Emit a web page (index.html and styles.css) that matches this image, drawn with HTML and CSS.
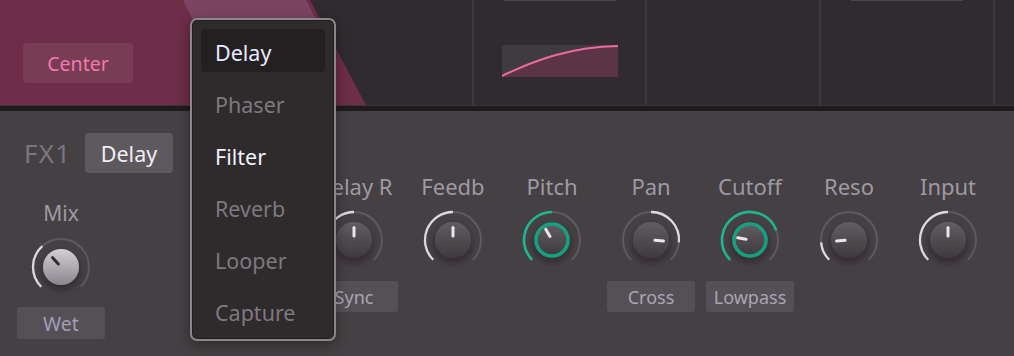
FILE: index.html
```html
<!DOCTYPE html>
<html>
<head>
<meta charset="utf-8">
<link rel="stylesheet" href="styles.css">
</head>
<body>
<svg class="defs" width="0" height="0" aria-hidden="true">
  <defs>
    <linearGradient id="kg" x1="0" y1="0" x2="0" y2="1">
      <stop offset="0" stop-color="#625d62"/>
      <stop offset="1" stop-color="#3e3a3d"/>
    </linearGradient>
    <linearGradient id="kgl" x1="0" y1="0" x2="0" y2="1">
      <stop offset="0" stop-color="#d4cfd5"/>
      <stop offset="1" stop-color="#8b868d"/>
    </linearGradient>
    <filter id="ks" x="-60%" y="-60%" width="220%" height="220%">
      <feDropShadow dx="0" dy="4" stdDeviation="3" flood-color="#1c181a" flood-opacity="0.55"/>
    </filter>
  </defs>
</svg>

<div class="top">
  <div class="cell first">
    <svg class="art" width="472" height="105" viewBox="0 0 472 105">
      <polygon points="0,0 310,0 366,105 0,105" fill="#6e2d48"/>
      <path d="M183,0 L306,0 L328,42 L206,42 Q192,20 183,0 Z" fill="#7a4462"/>
    </svg>
    <div class="center-btn">Center</div>
  </div>
  <div class="cell">
    <div class="tab"></div>
    <svg class="curve" width="116" height="32" viewBox="0 0 116 32">
      <rect x="0" y="0" width="116" height="32" rx="2" fill="#403b3f"/>
      <path d="M0,31 C35,14 70,2 116,1 L116,32 L0,32 Z" fill="#5b3546"/>
      <path d="M0,31 C35,14 70,2 116,1" fill="none" stroke="#ec6aa0" stroke-width="2"/>
    </svg>
  </div>
  <div class="cell"></div>
  <div class="cell">
    <div class="tab"></div>
  </div>
  <div class="cell last"></div>
</div>
<div class="sep"></div>

<div class="panel">
  <div class="left">
    <div class="fx-head">
      <span class="fx-name">FX1</span>
      <span class="fx-type">Delay</span>
    </div>
    <div class="col mix">
      <div class="label mix-label">Mix</div>
      <svg class="knob" width="64" height="64" viewBox="0 0 64 64">
        <path class="track" d="M12.2 51.8 A28 28 0 1 1 51.8 51.8"/>
        <path class="val" d="M12.2 51.8 A28 28 0 0 1 13.26 11.19"/>
        <circle class="body light" cx="32" cy="32" r="18"/>
        <line class="ptr dark" x1="32" y1="28" x2="32" y2="19.5" transform="rotate(-42 32 32)"/>
      </svg>
      <div class="btn wet">Wet</div>
    </div>
  </div>

  <div class="knobs">
    <div class="col placeholder"></div>
    <div class="col">
      <div class="label">Delay R</div>
      <svg class="knob" width="64" height="64" viewBox="0 0 64 64">
        <path class="track" d="M12.2 51.8 A28 28 0 1 1 51.8 51.8"/>
        <path class="val" d="M12.2 51.8 A28 28 0 0 1 32 4"/>
        <circle class="body" cx="32" cy="32" r="18"/>
        <line class="ptr" x1="32" y1="28" x2="32" y2="19.5"/>
      </svg>
      <div class="btn">Sync</div>
    </div>
    <div class="col">
      <div class="label">Feedb</div>
      <svg class="knob" width="64" height="64" viewBox="0 0 64 64">
        <path class="track" d="M12.2 51.8 A28 28 0 1 1 51.8 51.8"/>
        <path class="val" d="M12.2 51.8 A28 28 0 0 1 32 4"/>
        <circle class="body" cx="32" cy="32" r="18"/>
        <line class="ptr" x1="32" y1="28" x2="32" y2="19.5"/>
      </svg>
    </div>
    <div class="col">
      <div class="label">Pitch</div>
      <svg class="knob" width="64" height="64" viewBox="0 0 64 64">
        <path class="track" d="M12.2 51.8 A28 28 0 1 1 51.8 51.8"/>
        <path class="val teal" d="M12.2 51.8 A28 28 0 0 1 32 4"/>
        <circle class="body active" cx="32" cy="32" r="16"/>
        <line class="ptr" x1="32" y1="28" x2="32" y2="19.5" transform="rotate(-30 32 32)"/>
      </svg>
    </div>
    <div class="col">
      <div class="label">Pan</div>
      <svg class="knob" width="64" height="64" viewBox="0 0 64 64">
        <path class="track" d="M12.2 51.8 A28 28 0 1 1 51.8 51.8"/>
        <path class="val" d="M32 4 A28 28 0 0 1 59.89 34.44"/>
        <circle class="body" cx="32" cy="32" r="18"/>
        <line class="ptr" x1="32" y1="28" x2="32" y2="19.5" transform="rotate(95 32 32)"/>
      </svg>
      <div class="btn">Cross</div>
    </div>
    <div class="col">
      <div class="label">Cutoff</div>
      <svg class="knob" width="64" height="64" viewBox="0 0 64 64">
        <path class="track" d="M12.2 51.8 A28 28 0 1 1 51.8 51.8"/>
        <path class="val teal" d="M12.2 51.8 A28 28 0 1 1 58.31 22.42"/>
        <circle class="body active" cx="32" cy="32" r="16"/>
        <line class="ptr" x1="32" y1="28" x2="32" y2="19.5" transform="rotate(-80 32 32)"/>
      </svg>
      <div class="btn">Lowpass</div>
    </div>
    <div class="col">
      <div class="label">Reso</div>
      <svg class="knob" width="64" height="64" viewBox="0 0 64 64">
        <path class="track" d="M12.2 51.8 A28 28 0 1 1 51.8 51.8"/>
        <path class="val" d="M12.2 51.8 A28 28 0 0 1 4.11 34.44"/>
        <circle class="body" cx="32" cy="32" r="18"/>
        <line class="ptr" x1="32" y1="28" x2="32" y2="19.5" transform="rotate(-95 32 32)"/>
      </svg>
    </div>
    <div class="col">
      <div class="label">Input</div>
      <svg class="knob" width="64" height="64" viewBox="0 0 64 64">
        <path class="track" d="M12.2 51.8 A28 28 0 1 1 51.8 51.8"/>
        <path class="val" d="M12.2 51.8 A28 28 0 0 1 32 4"/>
        <circle class="body" cx="32" cy="32" r="18"/>
        <line class="ptr" x1="32" y1="28" x2="32" y2="19.5"/>
      </svg>
    </div>
  </div>
</div>

<div class="menu">
  <div class="item selected">Delay</div>
  <div class="item">Phaser</div>
  <div class="item hot">Filter</div>
  <div class="item">Reverb</div>
  <div class="item">Looper</div>
  <div class="item">Capture</div>
</div>
</body>
</html>
```

FILE: styles.css
```css
* { box-sizing: border-box; }

html, body {
  margin: 0;
  padding: 0;
}

body {
  width: 1014px;
  height: 356px;
  overflow: hidden;
  background: #454043;
  font-family: "Noto Sans", "Open Sans", sans-serif;
  position: relative;
}

.defs {
  display: block;
  width: 0;
  height: 0;
  overflow: hidden;
}

/* ---------- top strip ---------- */
.top {
  display: flex;
  height: 105px;
  background: #302b2e;
}

.cell {
  width: 174px;
  flex: none;
  border-left: 2px solid #3e393c;
  display: flex;
  flex-direction: column;
  align-items: center;
}

.cell.first {
  width: 472px;
  border-left: none;
  position: relative;
  align-items: flex-start;
}

.cell:nth-child(2) { width: 173px; }
.cell.last { flex: 1; }

.art {
  position: absolute;
  left: 0;
  top: 0;
}

.center-btn {
  position: relative;
  margin: 43px 0 0 23px;
  width: 110px;
  height: 40px;
  border-radius: 4px;
  background: rgba(255, 255, 255, 0.075);
  color: #f27aab;
  font-size: 19.5px;
  display: flex;
  align-items: center;
  justify-content: center;
}

.tab {
  width: 112px;
  height: 1px;
  background: #4b4649;
}

.curve {
  display: block;
  margin-top: 44px;
}

.sep {
  height: 6px;
  background: #1f1b1d;
  border-top: 1px solid #3a3538;
}

/* ---------- FX panel ---------- */
.panel {
  display: flex;
  height: 245px;
  padding: 22px 0 0 17px;
  background: #454043;
  border-top-left-radius: 4px;
}

.left {
  width: 194px;
  flex: none;
}

.fx-head {
  display: flex;
  align-items: center;
  height: 40px;
  padding-left: 7px;
}

.fx-name {
  color: #7b767a;
  font-size: 26px;
  letter-spacing: 1.2px;
  width: 61px;
}

.fx-type {
  width: 88px;
  height: 40px;
  border-radius: 4px;
  background: #5e595d;
  color: #f1edf5;
  font-size: 21.5px;
  display: flex;
  align-items: center;
  justify-content: center;
}

.knobs {
  display: flex;
  gap: 11px;
  margin-top: 40px;
}

.col {
  width: 88px;
  flex: none;
  display: flex;
  flex-direction: column;
  align-items: center;
}

.col.mix {
  margin-top: 27px;
}

.label {
  font-size: 22px;
  line-height: 26px;
  color: #9f99a3;
  white-space: nowrap;
}

.label.mix-label {
  font-size: 21px;
}

.knob {
  display: block;
  margin-top: 9px;
  overflow: visible;
}

.track {
  fill: none;
  stroke: #5e595d;
  stroke-width: 2;
}

.val {
  fill: none;
  stroke: #dcd7de;
  stroke-width: 2.3;
}

.val.teal {
  stroke: #1fb58f;
  stroke-width: 2.6;
}

.body {
  fill: url(#kg);
  filter: url(#ks);
}

.body.light {
  fill: url(#kgl);
}

.body.active {
  stroke: #15a07f;
  stroke-width: 3.5;
}

.ptr {
  stroke: #ece5ee;
  stroke-width: 3;
  stroke-linecap: round;
}

.ptr.dark {
  stroke: #2f2b2e;
}

.btn {
  margin-top: 9px;
  width: 88px;
  height: 31px;
  border-radius: 3px;
  background: #555056;
  color: #aaa4b2;
  font-size: 18px;
  display: flex;
  align-items: center;
  justify-content: center;
}

.btn.wet {
  margin-top: 8px;
  height: 32px;
  font-size: 19.5px;
  color: #a39fb5;
}

/* ---------- dropdown menu ---------- */
.menu {
  position: absolute;
  left: 190px;
  top: 18px;
  width: 146px;
  height: 323px;
  padding: 9px 9px 7px 9px;
  border: 2px solid #8b868c;
  border-radius: 7px;
  background: #2f2a2c;
  box-shadow: 0 4px 14px rgba(0, 0, 0, 0.35), inset 0 0 0 1px #221e20;
  display: flex;
  flex-direction: column;
  gap: 9px;
  z-index: 5;
}

.item {
  height: 43px;
  flex: none;
  padding: 3px 0 0 14px;
  display: flex;
  align-items: center;
  font-size: 21.5px;
  color: #7e797f;
  border-radius: 4px;
}

.item.selected {
  background: #242022;
  color: #e7ebff;
}

.item.hot {
  color: #f2f2fa;
}
```
